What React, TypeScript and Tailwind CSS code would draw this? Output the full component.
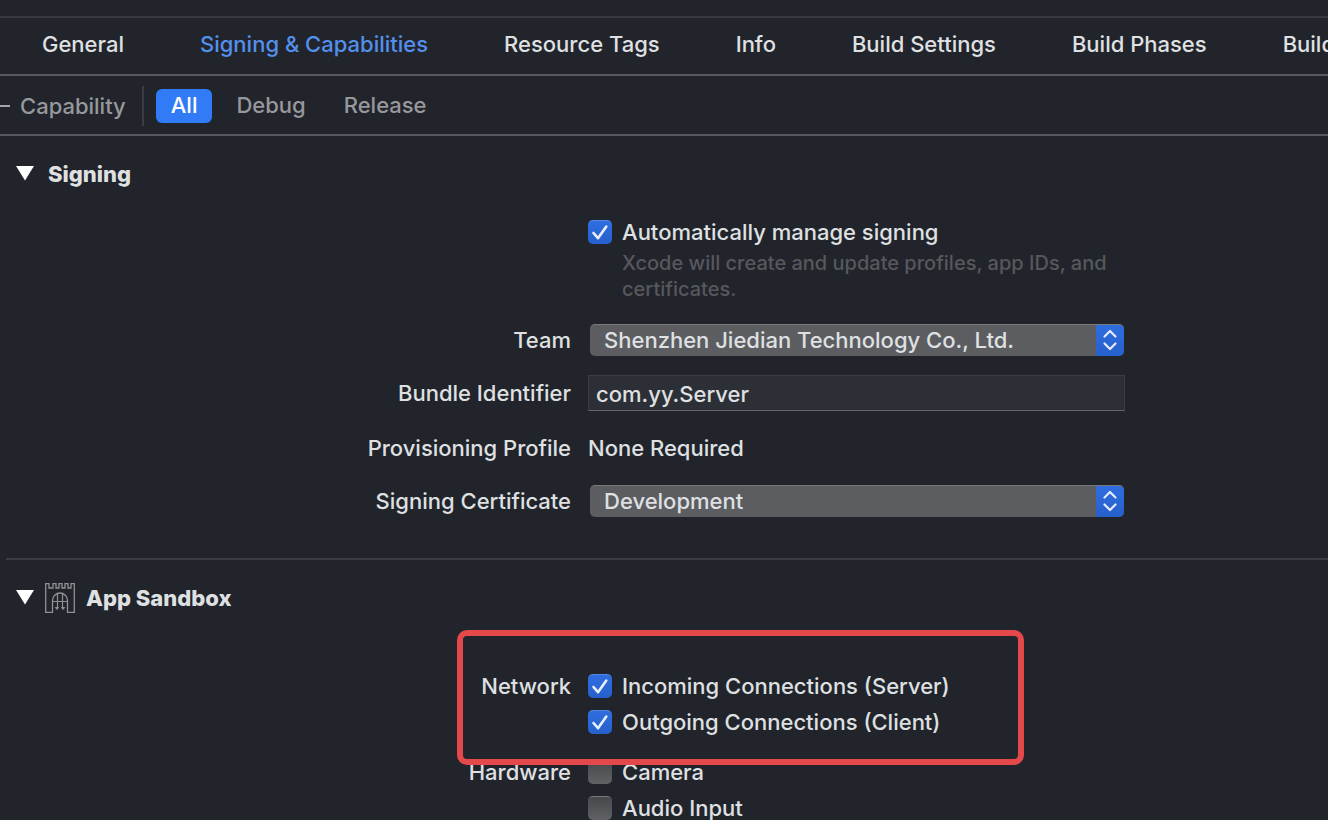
import { useState } from "react";
import type { ReactNode } from "react";

const tabs = [
  "General",
  "Signing & Capabilities",
  "Resource Tags",
  "Info",
  "Build Settings",
  "Build Phases",
  "Build Rules",
];

function Disclosure() {
  return (
    <svg width="18" height="16" viewBox="0 0 18 16" className="shrink-0" aria-hidden="true">
      <path d="M0 0H18L9 14.500Z" fill="#ffffff" />
    </svg>
  );
}

function CastleIcon() {
  return (
    <svg
      width="30"
      height="30"
      viewBox="0 0 30 30"
      fill="none"
      stroke="#8f9194"
      strokeWidth="1.3"
      className="shrink-0"
      aria-hidden="true"
    >
      <path d="M.7 29.3V.7H4V5H8V.7H11V5H14V.7H17V5H20V.7H23V5H26V.7H29.3V29.3H22.5V17.5A7.5 7.5 0 0 0 7.5 17.5V29.3Z" />
      <path d="M8 18.500H22M12.500 11V25M17.500 11V25" strokeWidth="1.2" />
      <path d="M10.300 24.500H13.500L12 26.500ZM16.500 24.500H19.700L18 26.500Z" fill="#8f9194" strokeWidth="1" />
    </svg>
  );
}

function Check({ label, initial = false }: { label: string; initial?: boolean }) {
  const [on, setOn] = useState(initial);
  return (
    <label className="flex h-9 items-center gap-[10px]">
      <span className="grid size-6 shrink-0">
        <input
          type="checkbox"
          checked={on}
          onChange={() => setOn(!on)}
          className="col-start-1 row-start-1 size-6 appearance-none rounded-[5px] border-t border-[#77797c] bg-linear-to-b from-[#46484b] to-[#606265] checked:border-[#5586e4] checked:from-[#2f6de0] checked:to-[#2660cb]"
        />
        {on && (
          <svg
            viewBox="0 0 24 24"
            fill="none"
            stroke="#e9effb"
            strokeWidth="2.6"
            strokeLinecap="round"
            strokeLinejoin="round"
            className="pointer-events-none col-start-1 row-start-1 size-6"
            aria-hidden="true"
          >
            <path d="M5.500 13L10 18.200L18.300 6.500" />
          </svg>
        )}
      </span>
      <span>{label}</span>
    </label>
  );
}

function Popup({ id, value }: { id: string; value: string }) {
  return (
    <div className="mr-px ml-[2px] grid h-8 grid-rows-1 overflow-hidden rounded-[5px] border-t border-[#77797d] bg-[#5b5d61]">
      <select
        id={id}
        defaultValue={value}
        className="col-start-1 row-start-1 h-full min-h-0 w-full appearance-none bg-transparent pr-8 pb-px pl-[14px] leading-[30px]"
      >
        <option>{value}</option>
      </select>
      <span className="pointer-events-none col-start-1 row-start-1 flex w-7 items-center justify-center justify-self-end bg-linear-to-b from-[#2f6de0] to-[#2660cb] pb-px">
        <svg
          width="16"
          height="22"
          viewBox="0 0 16 22"
          fill="none"
          stroke="#e4ecfb"
          strokeWidth="2.2"
          strokeLinecap="round"
          strokeLinejoin="round"
          aria-hidden="true"
        >
          <path d="M2.500 7.500L8 2L13.500 7.500M2.500 14.500L8 20L13.500 14.500" />
        </svg>
      </span>
    </div>
  );
}

function Row({ label, htmlFor, children }: { label?: string; htmlFor?: string; children: ReactNode }) {
  return (
    <div className="grid grid-cols-[43%_1fr] gap-x-[17px]">
      <div className="flex max-h-9 items-center justify-end leading-8 whitespace-nowrap">
        {label && (htmlFor ? <label htmlFor={htmlFor}>{label}</label> : <span>{label}</span>)}
      </div>
      <div className="max-w-[537px]">{children}</div>
    </div>
  );
}

export default function App() {
  const [tab, setTab] = useState("Signing & Capabilities");
  return (
    <div className="flex h-screen flex-col overflow-hidden bg-[#22242b] font-['Inter',sans-serif] text-[22px] leading-9 font-[450] text-[#dfe0e2]">
      <nav className="mt-4 flex h-[60px] shrink-0 overflow-hidden border-y-2 border-t-[#36393f] border-b-[#565a60] pl-1">
        {tabs.map((name) => (
          <button
            key={name}
            type="button"
            onClick={() => setTab(name)}
            className={`shrink-0 px-[38px] pb-1 whitespace-nowrap ${name === tab ? "text-[#5390ec]" : ""}`}
          >
            {name}
          </button>
        ))}
      </nav>

      <div className="flex h-[60px] shrink-0 items-center border-b-2 border-[#565a60] pt-[2px] text-[#97989c]">
        <button type="button" className="flex items-center gap-[10px] pr-4">
          <svg width="10" height="2" viewBox="0 0 10 2" aria-hidden="true">
            <path d="M0 1H10" stroke="#a5a6a9" strokeWidth="2" />
          </svg>
          Capability
        </button>
        <span className="mr-3 h-10 w-[2px] bg-[#393c42]" />
        <button type="button" className="h-[34px] rounded-[6px] bg-[#327bf7] px-[15px] pb-[2px] leading-8 text-white">
          All
        </button>
        <button type="button" className="ml-6 pb-[2px]">
          Debug
        </button>
        <button type="button" className="ml-[38px] pb-[2px]">
          Release
        </button>
      </div>

      <main className="min-h-0 flex-1 overflow-hidden">
        <section className="pt-5 pb-[41px]">
          <h2 className="flex items-center gap-[14px] pl-4 font-extrabold">
            <Disclosure />
            Signing
          </h2>
          <div className="mt-[22px] flex flex-col gap-[22px]">
            <Row>
              <Check label="Automatically manage signing" initial />
              <p className="pl-[34px] text-[20px] leading-[26px] font-medium text-[#56585d]">
                Xcode will create and update profiles, app IDs, and certificates.
              </p>
            </Row>
            <div className="flex flex-col gap-[19px]">
              <Row label="Team" htmlFor="team">
                <Popup id="team" value="Shenzhen Jiedian Technology Co., Ltd." />
              </Row>
              <Row label="Bundle Identifier" htmlFor="bundle">
                <input
                  id="bundle"
                  type="text"
                  defaultValue="com.yy.Server"
                  className="block h-9 w-full border border-[#3b3d43] border-b-[#63656a] bg-[#2d2f36] px-[7px] pt-[2px]"
                />
              </Row>
              <Row label="Provisioning Profile">None Required</Row>
              <Row label="Signing Certificate" htmlFor="certificate">
                <Popup id="certificate" value="Development" />
              </Row>
            </div>
          </div>
        </section>

        <section className="ml-[6px] border-t-2 border-[#393c42]" />

        <section className="pt-5">
          <h2 className="flex items-center pl-4 font-extrabold">
            <Disclosure />
            <span className="mr-[11px] ml-[11px]">
              <CastleIcon />
            </span>
            App Sandbox
          </h2>
          <div className="mt-[52px] flex flex-col gap-[14px]">
            <Row label="Network">
              <div className="relative">
                <Check label="Incoming Connections (Server)" initial />
                <Check label="Outgoing Connections (Client)" initial />
                <div className="pointer-events-none absolute -top-[38px] -bottom-[25px] -left-[131px] z-10 w-[567px] rounded-[10px] border-[6px] border-[#e5484b]" />
              </div>
            </Row>
            <Row label="Hardware">
              <Check label="Camera" />
              <Check label="Audio Input" />
            </Row>
          </div>
        </section>
      </main>
    </div>
  );
}
